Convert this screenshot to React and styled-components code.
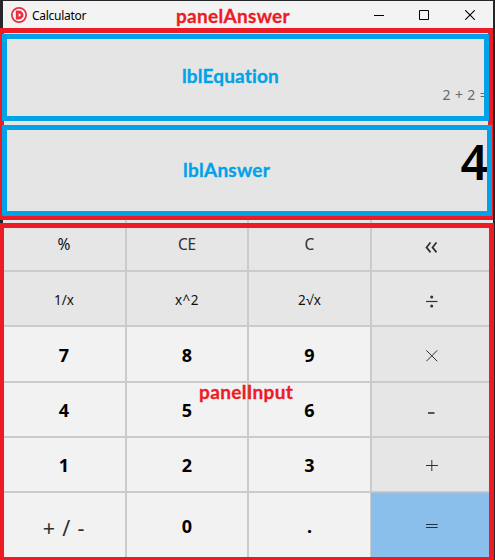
import React from "react";
import styled, { createGlobalStyle } from "styled-components";

const GlobalStyle = createGlobalStyle`
  *, *::before, *::after { box-sizing: border-box; }
  body { margin: 0; background: #24262a; overflow: hidden; }
`;

const Desktop = styled.main`
  position: relative;
  width: 495px;
  height: 560px;
  overflow: hidden;
  padding: 1px 2px 0 3px;
  background: #24262a;
  font-family: "Noto Sans", "Open Sans", sans-serif;
`;

const Window = styled.section`
  height: 559px;
  display: flex;
  flex-direction: column;
  background: #e5e5e5;
`;

const TitleBar = styled.header`
  flex: 0 0 28px;
  display: flex;
  align-items: center;
  padding-left: 8px;
  background: #f3f3f3;
`;

const Title = styled.span`
  margin-left: 5px;
  padding-top: 2px;
  font-size: 12px;
  line-height: 16px;
  letter-spacing: -0.28px;
  color: #000;
`;

const WindowControls = styled.div`
  margin-left: auto;
  display: flex;
`;

const ControlButton = styled.button`
  width: 46px;
  height: 28px;
  padding: 0;
  border: 0;
  background: none;
  display: grid;
  place-items: center;
`;

const AnswerPanel = styled.div`
  flex: 0 0 187px;
  display: flex;
  flex-direction: column;
  align-items: flex-end;
`;

const Equation = styled.output`
  height: 92px;
  padding-top: 56px;
  margin-right: 5px;
  font-size: 14px;
  line-height: 20px;
  letter-spacing: 0.35px;
  white-space: pre;
  color: #6a6a6a;
`;

const Answer = styled.output`
  height: 95px;
  margin-right: 5px;
  padding-top: 11px;
  font-size: 48px;
  font-weight: 600;
  line-height: 60px;
  color: #000;
`;

const Keypad = styled.div`
  flex: 1;
  display: grid;
  grid-template-columns: 122px 120px 121px 121px;
  grid-template-rows: 54px 53px 54px 53px 53px 69px;
  gap: 2px;
  background: #cbcbcb;
`;

const tones = { dim: "#e6e6e6", light: "#f2f2f2", accent: "#8abeeb" };

const Key = styled.button`
  display: flex;
  align-items: center;
  justify-content: center;
  border: 0;
  padding: ${(p) => p.$top || 0}px ${(p) => p.$right || 0}px ${(p) => p.$bottom || 0}px 0;
  background: ${(p) => tones[p.$tone]};
  box-shadow: ${(p) => (p.$tone === "accent" ? "-1px 0 0 #8abeeb, 0 -1px 0 #b0c4d4" : "none")};
  color: ${(p) => (p.$bold ? "#000" : p.$color || "#303030")};
  font-family: inherit;
  font-size: ${(p) => p.$size}px;
  font-weight: ${(p) => (p.$bold ? 700 : 400)};
  line-height: 24px;
  letter-spacing: ${(p) => p.$spacing || 0}px;
  white-space: pre;
`;

const Frame = styled.div`
  position: absolute;
  left: ${(p) => p.$x}px;
  top: ${(p) => p.$y}px;
  width: ${(p) => p.$w}px;
  height: ${(p) => p.$h}px;
  border: 5px solid ${(p) => p.$color};
  pointer-events: none;
`;

const Note = styled.span`
  position: absolute;
  left: ${(p) => p.$x}px;
  top: ${(p) => p.$y}px;
  font-family: Lato, sans-serif;
  font-size: 19px;
  font-weight: 700;
  font-variant-ligatures: none;
  line-height: 24px;
  letter-spacing: ${(p) => p.$spacing}px;
  color: ${(p) => p.$color};
  -webkit-text-stroke: 0.3px ${(p) => p.$color};
  pointer-events: none;
`;

const Glyph = styled.svg`
  display: block;
  fill: none;
  stroke: #303030;
`;

const RED = "#ed1c24";
const BLUE = "#00a2e8";

const AppLogo = () => (
  <Glyph width="16" height="16" viewBox="0 0 16 16">
    <circle cx="8" cy="8" r="7.1" fill="#fff" stroke="#ea2f3e" strokeWidth="1.8" />
    <path d="M6.2 5h1.9a3 3 0 0 1 0 6H6.2z" stroke="#ea2f3e" strokeWidth="2.8" />
  </Glyph>
);

const Divide = () => (
  <Glyph width="12" height="14" viewBox="0 0 12 14">
    <path d="M0 7.5h11.5" strokeWidth="1.2" />
    <circle cx="5.7" cy="3" r="1.5" fill="#303030" stroke="none" />
    <circle cx="5.7" cy="12" r="1.5" fill="#303030" stroke="none" />
  </Glyph>
);

const Times = () => (
  <Glyph width="12" height="12" viewBox="0 0 12 12">
    <path d="M.3.3l11 11M11.3.3l-11 11" />
  </Glyph>
);

const Plus = () => (
  <Glyph width="12" height="12" viewBox="0 0 12 12">
    <path d="M0 5.5h12M5.8 0v11" />
  </Glyph>
);

const Equals = () => (
  <Glyph width="12" height="4" viewBox="0 0 12 4">
    <path d="M0 .5h11.7M0 3.5h11.7" />
  </Glyph>
);

const Minus = () => (
  <Glyph width="7" height="2" viewBox="0 0 7 2">
    <path d="M0 1h6.5" strokeWidth="1.6" />
  </Glyph>
);

const Back = () => (
  <Glyph width="13" height="11" viewBox="0 0 13 11">
    <path d="M5.5.4L1.5 5.4l4 5M11.5.4L7.5 5.4l4 5" strokeWidth="1.7" />
  </Glyph>
);

const digit = (label, bottom = 0) => ({ label, tone: "light", size: 18, bold: true, top: bottom ? 0 : 1, bottom });

const keys = [
  { label: "%", tone: "dim", size: 15.5, top: 2, color: "#101010" },
  { label: "CE", tone: "dim", size: 15.5, top: 2, spacing: -0.2 },
  { label: "C", tone: "dim", size: 15.5, top: 2 },
  { label: <Back />, name: "Backspace", tone: "dim", top: 8, right: 2 },
  { label: "1/x", tone: "dim", size: 13.5, top: 3, spacing: 0.1, color: "#101010" },
  { label: "x^2", tone: "dim", size: 13.5, top: 3, spacing: 0.5, color: "#101010" },
  { label: "2√x", tone: "dim", size: 13.5, top: 3, spacing: 0.3, color: "#101010" },
  { label: <Divide />, name: "Divide", tone: "dim", top: 5, right: 2 },
  digit("7"), digit("8"), digit("9"),
  { label: <Times />, name: "Multiply", tone: "dim", top: 3, right: 2 },
  digit("4"), digit("5"), digit("6"),
  { label: <Minus />, name: "Subtract", tone: "dim", top: 7, right: 2 },
  digit("1"), digit("2"), digit("3"),
  { label: <Plus />, name: "Add", tone: "dim", top: 3, right: 2 },
  { label: "+ / -", tone: "light", size: 21.5, top: 0, spacing: 0.8 },
  digit("0", 3), digit(".", 3),
  { label: <Equals />, name: "Equals", tone: "accent", right: 2, bottom: 3 },
];

export default function App() {
  return (
    <>
      <GlobalStyle />
      <Desktop>
        <Window>
          <TitleBar>
            <AppLogo />
            <Title>Calculator</Title>
            <WindowControls>
              <ControlButton aria-label="Minimize">
                <Glyph width="12" height="10"><path d="M2 5.5h10" stroke="#000" /></Glyph>
              </ControlButton>
              <ControlButton aria-label="Maximize">
                <Glyph width="10" height="10"><path d="M.5.5h9v9h-9z" stroke="#000" /></Glyph>
              </ControlButton>
              <ControlButton aria-label="Close">
                <Glyph width="10" height="10"><path d="M.2.2l9.6 9.6M9.8.2L.2 9.8" stroke="#000" strokeWidth="1.1" /></Glyph>
              </ControlButton>
            </WindowControls>
          </TitleBar>
          <AnswerPanel>
            <Equation>2 + 2 =</Equation>
            <Answer>4</Answer>
          </AnswerPanel>
          <Keypad>
            {keys.map((k, i) => (
              <Key
                key={i}
                aria-label={k.name}
                $tone={k.tone}
                $size={k.size || 16}
                $bold={k.bold}
                $top={k.top}
                $right={k.right}
                $bottom={k.bottom}
                $spacing={k.spacing}
                $color={k.color}
              >
                {k.label}
              </Key>
            ))}
          </Keypad>
        </Window>
        <Frame $x={-1} $y={28} $w={494} $h={192} $color={RED} />
        <Frame $x={2} $y={34} $w={487} $h={87} $color={BLUE} />
        <Frame $x={2} $y={125} $w={490} $h={91} $color={BLUE} />
        <Frame $x={-1} $y={223} $w={495} $h={339} $color={RED} />
        <Note $x={176} $y={4} $color={RED} $spacing={0.3}>panelAnswer</Note>
        <Note $x={182} $y={64} $color={BLUE} $spacing={0.15}>lblEquation</Note>
        <Note $x={183} $y={158} $color={BLUE} $spacing={0.25}>lblAnswer</Note>
        <Note $x={199} $y={380} $color={RED} $spacing={0.35}>panelInput</Note>
      </Desktop>
    </>
  );
}
